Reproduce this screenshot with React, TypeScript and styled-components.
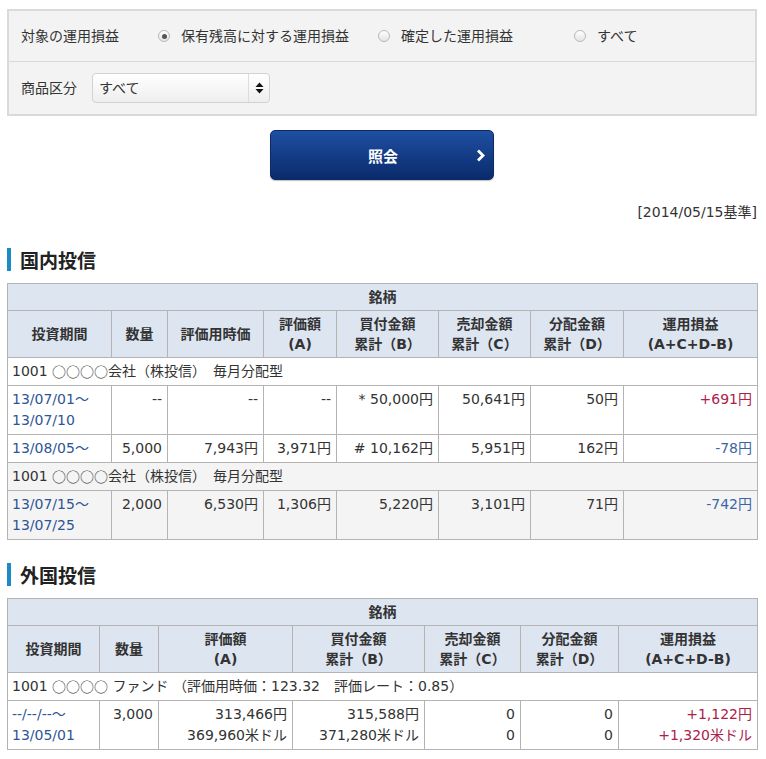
import React from "react";
import styled, { createGlobalStyle } from "styled-components";

const textColor = "#333333";
const borderColor = "#b4b4b4";
const headBg = "#dde5f1";
const linkColor = "#2d5597";
const plusColor = "#ad2149";
const minusColor = "#3a66a6";

const GlobalStyle = createGlobalStyle`
  body {
    margin: 0;
    background: #ffffff;
    color: ${textColor};
    font-family: "DejaVu Sans", "Noto Sans CJK JP", sans-serif;
    font-size: 14px;
  }
`;

const Page = styled.div`
  width: 750px;
  padding: 9px 9px 20px 7px;
`;

// FILTER //
const FilterBox = styled.div`
  border: 2px solid #dadada;
  background: #f3f3f3;
`;

const FilterRow = styled.div<{ $height: number; $divider?: boolean }>`
  display: flex;
  align-items: center;
  height: ${(p) => p.$height}px;
  padding-left: 12px;
  border-top: ${(p) => (p.$divider ? "1px solid #d9d9d9" : "none")};
  line-height: 20px;
`;

const FieldLabel = styled.div<{ $width: number }>`
  width: ${(p) => p.$width}px;
  flex-shrink: 0;
`;

const RadioOption = styled.label<{ $width: number }>`
  display: flex;
  align-items: center;
  gap: 11px;
  width: ${(p) => p.$width}px;
  flex-shrink: 0;
`;

const RadioMark = styled.span<{ $checked?: boolean }>`
  width: 12px;
  height: 12px;
  border-radius: 50%;
  box-sizing: border-box;
  border: 1px solid #b9b9b9;
  background: linear-gradient(#ffffff, #e4e4e4);
  display: flex;
  align-items: center;
  justify-content: center;

  &::after {
    content: "";
    width: 5px;
    height: 5px;
    border-radius: 50%;
    background: ${(p) => (p.$checked ? "#555555" : "transparent")};
  }
`;

const SelectBox = styled.div`
  display: flex;
  width: 178px;
  height: 30px;
  margin-top: -1px;
  box-sizing: border-box;
  border: 1px solid #d2d2d2;
  border-radius: 4px;
  background: linear-gradient(#ffffff, #eeeeee);
`;

const SelectValue = styled.div`
  flex: 1;
  padding-left: 6px;
  line-height: 28px;
`;

const SelectArrow = styled.div`
  width: 20px;
  border-left: 1px solid #dddddd;
  display: flex;
  align-items: center;
  justify-content: center;
`;

// BUTTON //
const ButtonRow = styled.div`
  display: flex;
  justify-content: center;
  margin-top: 14px;
`;

const SearchButton = styled.button`
  display: grid;
  grid-template-columns: 1fr auto 1fr;
  align-items: center;
  width: 224px;
  height: 50px;
  padding: 0 8px 0 10px;
  border: 1px solid #0b2a66;
  border-radius: 5px;
  background: linear-gradient(#1e4fa2, #0a2b6b);
  box-shadow: 0 1px 1px rgba(0, 0, 0, 0.25);
  color: #ffffff;
  font-family: "Noto Sans CJK JP", sans-serif;
  font-size: 15px;
  font-weight: 700;
  cursor: pointer;

  & > span {
    grid-column: 2;
  }

  & > svg {
    grid-column: 3;
    justify-self: end;
  }
`;

const BaseDate = styled.div`
  margin-top: 22px;
  text-align: right;
  line-height: 20px;
`;

// SECTIONS //
const SectionTitle = styled.h2<{ $top: number }>`
  margin: ${(p) => p.$top}px 0 12px 0;
  padding-left: 9px;
  border-left: 4px solid #1b8bc6;
  font-family: "Noto Sans CJK JP", sans-serif;
  font-size: 19px;
  font-weight: 700;
  line-height: 23px;
  color: #222222;
`;

const Table = styled.table`
  width: 750px;
  border-collapse: collapse;
  table-layout: fixed;
  font-size: 14px;
  line-height: 21px;
`;

const HeadCell = styled.th`
  background: ${headBg};
  border: 1px solid ${borderColor};
  padding: 3px 4px;
  font-weight: 700;
  line-height: 20px;
  text-align: center;
  vertical-align: middle;
  color: ${textColor};
`;

const BodyRow = styled.tr<{ $shaded?: boolean }>`
  background: ${(p) => (p.$shaded ? "#f4f4f4" : "#ffffff")};
`;

const Cell = styled.td<{ $align?: "left" | "right"; $tone?: "link" | "plus" | "minus" }>`
  border: 1px solid ${borderColor};
  padding: 3px 5px 3px 4px;
  vertical-align: top;
  text-align: ${(p) => p.$align || "right"};
  white-space: nowrap;
  overflow: hidden;
  color: ${(p) =>
    p.$tone === "link"
      ? linkColor
      : p.$tone === "plus"
      ? plusColor
      : p.$tone === "minus"
      ? minusColor
      : textColor};
`;

// masked fund names use full-width circles
const Masked = styled.span`
  font-family: "Noto Sans CJK JP", sans-serif;
  line-height: 21px;
  vertical-align: top;
`;

const Chevron = () => (
  <svg width="9" height="13" viewBox="0 0 9 13">
    <path d="M2 1.5 L7 6.5 L2 11.5" fill="none" stroke="#ffffff" strokeWidth="2.8" />
  </svg>
);

const UpDown = () => (
  <svg width="9" height="12" viewBox="0 0 9 12">
    <path d="M4.5 0.5 L8.5 5 L0.5 5 Z" fill="#111111" />
    <path d="M0.5 7 L8.5 7 L4.5 11.5 Z" fill="#111111" />
  </svg>
);

const domesticCols = [104, 56, 96, 73, 102, 92, 93, 134];
const foreignCols = [92, 59, 134, 132, 96, 98, 139];

const ColGroup = ({ widths }: { widths: number[] }) => (
  <colgroup>
    {widths.map((w, i) => (
      <col key={i} style={{ width: w }} />
    ))}
  </colgroup>
);

const App: React.FunctionComponent = () => {
  return (
    <Page>
      <GlobalStyle />
      <FilterBox>
        <FilterRow $height={50}>
          <FieldLabel $width={137}>対象の運用損益</FieldLabel>
          <RadioOption $width={220}>
            <RadioMark $checked />
            保有残高に対する運用損益
          </RadioOption>
          <RadioOption $width={196}>
            <RadioMark />
            確定した運用損益
          </RadioOption>
          <RadioOption $width={100}>
            <RadioMark />
            すべて
          </RadioOption>
        </FilterRow>
        <FilterRow $height={52} $divider>
          <FieldLabel $width={71}>商品区分</FieldLabel>
          <SelectBox>
            <SelectValue>すべて</SelectValue>
            <SelectArrow>
              <UpDown />
            </SelectArrow>
          </SelectBox>
        </FilterRow>
      </FilterBox>

      <ButtonRow>
        <SearchButton>
          <span>照会</span>
          <Chevron />
        </SearchButton>
      </ButtonRow>

      <BaseDate>[2014/05/15基準]</BaseDate>

      <SectionTitle $top={26}>国内投信</SectionTitle>
      <Table>
        <ColGroup widths={domesticCols} />
        <thead>
          <tr>
            <HeadCell colSpan={8}>銘柄</HeadCell>
          </tr>
          <tr>
            <HeadCell>投資期間</HeadCell>
            <HeadCell>数量</HeadCell>
            <HeadCell>評価用時価</HeadCell>
            <HeadCell>
              評価額
              <br />
              (A)
            </HeadCell>
            <HeadCell>
              買付金額
              <br />
              累計（B）
            </HeadCell>
            <HeadCell>
              売却金額
              <br />
              累計（C）
            </HeadCell>
            <HeadCell>
              分配金額
              <br />
              累計（D）
            </HeadCell>
            <HeadCell>
              運用損益
              <br />
              (A+C+D-B)
            </HeadCell>
          </tr>
        </thead>
        <tbody>
          <BodyRow>
            <Cell colSpan={8} $align="left">
              1001 <Masked>○○○○</Masked>会社（株投信）　毎月分配型
            </Cell>
          </BodyRow>
          <BodyRow>
            <Cell $align="left" $tone="link">
              13/07/01～
              <br />
              13/07/10
            </Cell>
            <Cell>--</Cell>
            <Cell>--</Cell>
            <Cell>--</Cell>
            <Cell>* 50,000円</Cell>
            <Cell>50,641円</Cell>
            <Cell>50円</Cell>
            <Cell $tone="plus">+691円</Cell>
          </BodyRow>
          <BodyRow>
            <Cell $align="left" $tone="link">
              13/08/05～
            </Cell>
            <Cell>5,000</Cell>
            <Cell>7,943円</Cell>
            <Cell>3,971円</Cell>
            <Cell># 10,162円</Cell>
            <Cell>5,951円</Cell>
            <Cell>162円</Cell>
            <Cell $tone="minus">-78円</Cell>
          </BodyRow>
          <BodyRow $shaded>
            <Cell colSpan={8} $align="left">
              1001 <Masked>○○○○</Masked>会社（株投信）　毎月分配型
            </Cell>
          </BodyRow>
          <BodyRow $shaded>
            <Cell $align="left" $tone="link">
              13/07/15～
              <br />
              13/07/25
            </Cell>
            <Cell>2,000</Cell>
            <Cell>6,530円</Cell>
            <Cell>1,306円</Cell>
            <Cell>5,220円</Cell>
            <Cell>3,101円</Cell>
            <Cell>71円</Cell>
            <Cell $tone="minus">-742円</Cell>
          </BodyRow>
        </tbody>
      </Table>

      <SectionTitle $top={23}>外国投信</SectionTitle>
      <Table>
        <ColGroup widths={foreignCols} />
        <thead>
          <tr>
            <HeadCell colSpan={7}>銘柄</HeadCell>
          </tr>
          <tr>
            <HeadCell>投資期間</HeadCell>
            <HeadCell>数量</HeadCell>
            <HeadCell>
              評価額
              <br />
              (A)
            </HeadCell>
            <HeadCell>
              買付金額
              <br />
              累計（B）
            </HeadCell>
            <HeadCell>
              売却金額
              <br />
              累計（C）
            </HeadCell>
            <HeadCell>
              分配金額
              <br />
              累計（D）
            </HeadCell>
            <HeadCell>
              運用損益
              <br />
              (A+C+D-B)
            </HeadCell>
          </tr>
        </thead>
        <tbody>
          <BodyRow>
            <Cell colSpan={7} $align="left">
              1001 <Masked>○○○○</Masked> ファンド （評価用時価：123.32　評価レート：0.85）
            </Cell>
          </BodyRow>
          <BodyRow>
            <Cell $align="left" $tone="link">
              --/--/--～
              <br />
              13/05/01
            </Cell>
            <Cell>3,000</Cell>
            <Cell>
              313,466円
              <br />
              369,960米ドル
            </Cell>
            <Cell>
              315,588円
              <br />
              371,280米ドル
            </Cell>
            <Cell>
              0
              <br />0
            </Cell>
            <Cell>
              0
              <br />0
            </Cell>
            <Cell $tone="plus">
              +1,122円
              <br />
              +1,320米ドル
            </Cell>
          </BodyRow>
        </tbody>
      </Table>
    </Page>
  );
};

export default App;
